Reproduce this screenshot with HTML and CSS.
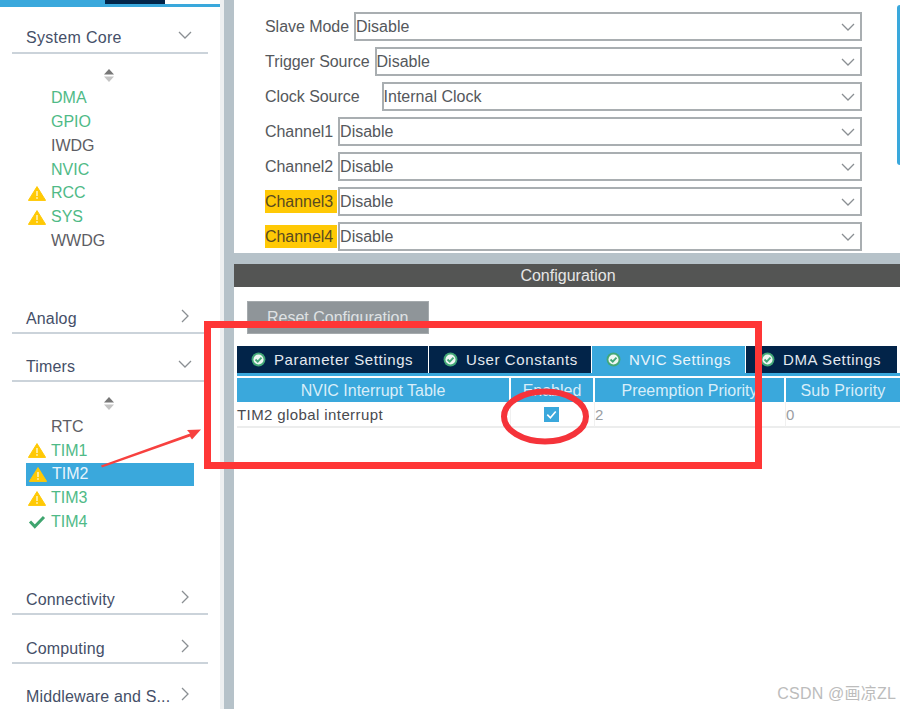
FILE: index.html
```html
<!DOCTYPE html>
<html lang="en">
<head>
<meta charset="utf-8">
<title>TIM2 NVIC Settings</title>
<link rel="stylesheet" href="styles.css">
</head>
<body>
<svg class="defs" width="0" height="0" aria-hidden="true">
  <symbol id="warn" viewBox="0 0 18 15"><path d="M9 .6 17.6 14.4H.4Z" fill="#ffc905" stroke="#ffc905" stroke-linejoin="round"/><path d="M9 5v5" stroke="#fff3b8" stroke-width="1.6"/><circle cx="9" cy="12" r=".9" fill="#fff3b8"/></symbol>
  <symbol id="ok" viewBox="0 0 18 15"><path d="M2 7.5 6.8 12.5 16 3" fill="none" stroke="#3fa56f" stroke-width="3"/></symbol>
  <symbol id="tabok" viewBox="0 0 16 16"><circle cx="8" cy="8" r="7.4" fill="#43a877"/><circle cx="8" cy="8" r="5.4" fill="#eef7f3"/><path d="M4.8 8 7.2 10.4 11.2 6" fill="none" stroke="#43a877" stroke-width="2"/></symbol>
  <symbol id="down" viewBox="0 0 14 8"><path d="M1 1 7 7 13 1" fill="none" stroke="#8a8f93" stroke-width="1.3"/></symbol>
  <symbol id="right" viewBox="0 0 8 14"><path d="M1 1 7 7 1 13" fill="none" stroke="#8a8f93" stroke-width="1.3"/></symbol>
  <symbol id="updown" viewBox="0 0 10 13"><path d="M5 0 10 5.5H0Z" fill="#777"/><path d="M5 13 10 7.5H0Z" fill="#c4c4c4"/></symbol>
</svg>
<div class="app">
  <aside class="sidebar">
    <div class="strip"><span class="strip-a"></span><span class="strip-b"></span></div>
    <div class="cat cat-first"><span>System Core</span><svg class="chev-d"><use href="#down"/></svg></div>
    <div class="list list-long">
      <svg class="updown"><use href="#updown"/></svg>
      <div class="item on"><span class="ic"></span>DMA</div>
      <div class="item on"><span class="ic"></span>GPIO</div>
      <div class="item"><span class="ic"></span>IWDG</div>
      <div class="item on"><span class="ic"></span>NVIC</div>
      <div class="item on"><svg class="ic"><use href="#warn"/></svg>RCC</div>
      <div class="item on"><svg class="ic"><use href="#warn"/></svg>SYS</div>
      <div class="item"><span class="ic"></span>WWDG</div>
    </div>
    <div class="cat"><span>Analog</span><svg class="chev-r"><use href="#right"/></svg></div>
    <div class="cat"><span>Timers</span><svg class="chev-d"><use href="#down"/></svg></div>
    <div class="list">
      <svg class="updown"><use href="#updown"/></svg>
      <div class="item"><span class="ic"></span>RTC</div>
      <div class="item on"><svg class="ic"><use href="#warn"/></svg>TIM1</div>
      <div class="item selected"><svg class="ic"><use href="#warn"/></svg>TIM2</div>
      <div class="item on"><svg class="ic"><use href="#warn"/></svg>TIM3</div>
      <div class="item on"><svg class="ic"><use href="#ok"/></svg>TIM4</div>
    </div>
    <div class="cat"><span>Connectivity</span><svg class="chev-r"><use href="#right"/></svg></div>
    <div class="cat cat-tall"><span>Computing</span><svg class="chev-r"><use href="#right"/></svg></div>
    <div class="cat cat-last"><span>Middleware and S...</span><svg class="chev-r"><use href="#right"/></svg></div>
  </aside>
  <div class="splitter"></div>
  <main class="main">
    <section class="modes">
      <div class="fields">
        <div class="field"><label>Slave Mode</label><div class="select">Disable<svg><use href="#down"/></svg></div></div>
        <div class="field"><label>Trigger Source</label><div class="select">Disable<svg><use href="#down"/></svg></div></div>
        <div class="field"><label class="wide">Clock Source</label><div class="select">Internal Clock<svg><use href="#down"/></svg></div></div>
        <div class="field"><label>Channel1</label><div class="select">Disable<svg><use href="#down"/></svg></div></div>
        <div class="field"><label>Channel2</label><div class="select">Disable<svg><use href="#down"/></svg></div></div>
        <div class="field"><label class="flag">Channel3</label><div class="select">Disable<svg><use href="#down"/></svg></div></div>
        <div class="field"><label class="flag">Channel4</label><div class="select">Disable<svg><use href="#down"/></svg></div></div>
      </div>
      <div class="side-tab"></div>
    </section>
    <div class="band"></div>
    <div class="bar">Configuration</div>
    <section class="config">
      <button class="reset">Reset Configuration</button>
      <div class="tabs">
        <div class="tab t1"><svg><use href="#tabok"/></svg>Parameter Settings</div>
        <div class="tab t2"><svg><use href="#tabok"/></svg>User Constants</div>
        <div class="tab t3 active"><svg><use href="#tabok"/></svg>NVIC Settings</div>
        <div class="tab t4"><svg><use href="#tabok"/></svg>DMA Settings</div>
      </div>
      <div class="table">
        <div class="th c1">NVIC Interrupt Table</div>
        <div class="th c2">Enabled</div>
        <div class="th c3">Preemption Priority</div>
        <div class="th c4">Sub Priority</div>
        <div class="td c1 name">TIM2 global interrupt</div>
        <div class="td c2 center"><span class="check"><svg viewBox="0 0 16 16"><path d="M3.5 8.2 6.8 11.5 12.5 4.8" fill="none" stroke="#fff" stroke-width="1.7"/></svg></span></div>
        <div class="td c3 num">2</div>
        <div class="td c4 num">0</div>
      </div>
    </section>
  </main>
</div>
<svg class="marks" viewBox="0 0 900 709" aria-hidden="true">
  <rect x="207.5" y="324.5" width="551" height="141" fill="none" stroke="#ff3636" stroke-width="7"/>
  <ellipse cx="545" cy="416.5" rx="41" ry="25" fill="none" stroke="#f5333a" stroke-width="6"/>
  <path d="M101 465.5 190 433.5 187 430 201 429.5 192 439.5 190 436.5 102 467.5Z" fill="#f7413f"/>
</svg>
<div class="watermark">CSDN @画凉ZL</div>
</body>
</html>
```

FILE: styles.css
```css
* { box-sizing: border-box; }
html, body { margin: 0; height: 100%; }
body {
  width: 900px;
  height: 709px;
  overflow: hidden;
  position: relative;
  background: #fff;
  font-family: "Liberation Sans", Arial, sans-serif;
  font-size: 16px;
  color: #55585c;
}
.defs { position: absolute; }
.app { display: flex; height: 709px; }

/* sidebar */
.sidebar { width: 220px; flex: none; overflow: hidden; padding: 0 12px; }
.strip {
  margin: 0 -12px;
  height: 7px;
  border-bottom: 3px solid #3aa8dc;
  display: flex;
  width: 222px;
}
.strip-a { width: 105px; background: #3aa8dc; }
.strip-b { width: 60px; background: #022449; }
.cat {
  height: 48px;
  width: 196px;
  border-bottom: 2px solid #cbd3da;
  display: flex;
  justify-content: space-between;
  align-items: flex-end;
  padding: 0 16px 4px 14px;
  color: #454f68;
  font-size: 16px;
  line-height: 18px;
  letter-spacing: .15px;
  white-space: nowrap;
}
.cat-first { height: 47px; padding-bottom: 5px; letter-spacing: .3px; }
.cat-tall { height: 49px; }
.cat-last { border-bottom-color: transparent; }
.chev-d { width: 14px; height: 8px; margin-bottom: 8px; }
.chev-r { width: 8px; height: 14px; margin-bottom: 5px; margin-right: 3px; }
.list { height: 185px; padding-top: 15px; }
.list-long { height: 232px; padding-top: 14.5px; }
.updown { display: block; width: 10px; height: 13px; margin: 0 0 5px 92px; }
.item {
  display: flex;
  align-items: center;
  height: 23.75px;
  width: 168px;
  margin-left: 14px;
  color: #5d5d64;
  font-size: 16px;
}
.item.on { color: #4fba87; }
.item.selected { background: #3aa8dc; color: #e8f4fb; padding-left: 1px; }
.item .ic { margin-left: 2px; margin-right: 5px; width: 18px; height: 15px; flex: none; }
.splitter { width: 14px; flex: none; border-left: 4px solid #eef0f1; background: #b6c2c9; }

/* main */
.main { flex: 1; min-width: 0; display: flex; flex-direction: column; }
.modes { height: 253px; display: flex; padding: 9px 0 0 31px; position: relative; overflow: hidden; }
.fields { width: 597px; flex: none; }
.field { display: flex; height: 35px; align-items: center; gap: 5px; }
.field label { line-height: 23px; white-space: nowrap; letter-spacing: -.05px; }
.field label.wide { margin-right: 17px; }
.field label.flag { background: #ffc905; color: #5a4a20; padding-right: 4px; margin-right: -4px; }
.select {
  flex: 1;
  height: 29px;
  border: 2px solid #a9aeb1;
  display: flex;
  align-items: center;
  justify-content: space-between;
  padding: 0 3px 0 0;
  background: #fff;
}
.select svg { width: 14px; height: 8px; margin-right: 2px; }
.side-tab {
  position: absolute;
  right: 0;
  top: 5px;
  width: 3px;
  height: 160px;
  background: #3aa8dc;
  border-radius: 3px 0 0 3px;
}
.band { height: 11px; background: #b6c2c9; flex: none; }
.bar {
  height: 23px;
  flex: none;
  background: #545554;
  color: #e6e6e6;
  text-align: center;
  line-height: 23px;
  font-size: 16px;
  padding-left: 2px;
}
.config { flex: 1; padding: 14px 0 0 3px; overflow: hidden; }
.reset {
  display: block;
  width: 182px;
  height: 33px;
  margin-left: 10px;
  padding: 0 0 0 3px;
  border: 1px solid #a5aaad;
  background: #8f9599;
  color: #dfe2e4;
  font: 16px "Liberation Sans", Arial, sans-serif;
  text-align: left;
  text-indent: 16px;
}
.tabs {
  display: flex;
  gap: 1px;
  margin-top: 12px;
  height: 30px;
  border-bottom: 3px solid #3aa8dc;
  width: 663px;
}
.tab {
  background: #022449;
  color: #e4e9ef;
  display: flex;
  align-items: center;
  gap: 8px;
  padding-left: 14px;
  font-size: 15px;
  letter-spacing: .6px;
  white-space: nowrap;
}
.tab svg { width: 15px; height: 15px; flex: none; }
.tab.active { background: #3aa8dc; color: #eaf5fb; }
.t1 { width: 191px; }
.t2 { width: 162px; }
.t3 { width: 153px; }
.t4 { width: 151px; }
.table {
  display: grid;
  grid-template-columns: 274px 84px 191px 114px;
  grid-auto-rows: 24px;
  margin-top: 2px;
  width: 663px;
}
.th {
  background: #3aa8dc;
  color: #d8eef9;
  text-align: center;
  line-height: 25px;
  border-right: 2px solid #fff;
  white-space: nowrap;
  overflow: hidden;
}
.th.c4 { letter-spacing: .2px; border-right: 0; }
.td { height: 26px; border-bottom: 2px solid #eceded; border-right: 1px solid #f0f0f0; line-height: 25px; font-size: 15px; }
.name { color: #4a4a4f; letter-spacing: .4px; white-space: nowrap; }
.center { display: flex; justify-content: center; align-items: center; }
.check { width: 15px; height: 15px; background: #3aa8dc; display: block; margin-right: 3px; }
.check svg { display: block; width: 15px; height: 15px; }
.num { color: #9a9ea3; }
.td.c4 { border-right: 0; }

/* annotations drawn over the screenshot */
.marks { position: absolute; left: 0; top: 0; width: 900px; height: 709px; pointer-events: none; }
.watermark {
  position: absolute;
  right: 4px;
  bottom: 5px;
  color: #bcbcbc;
  font: 16px "Liberation Sans", "Noto Sans CJK SC", sans-serif;
  letter-spacing: .2px;
  white-space: nowrap;
}
```
